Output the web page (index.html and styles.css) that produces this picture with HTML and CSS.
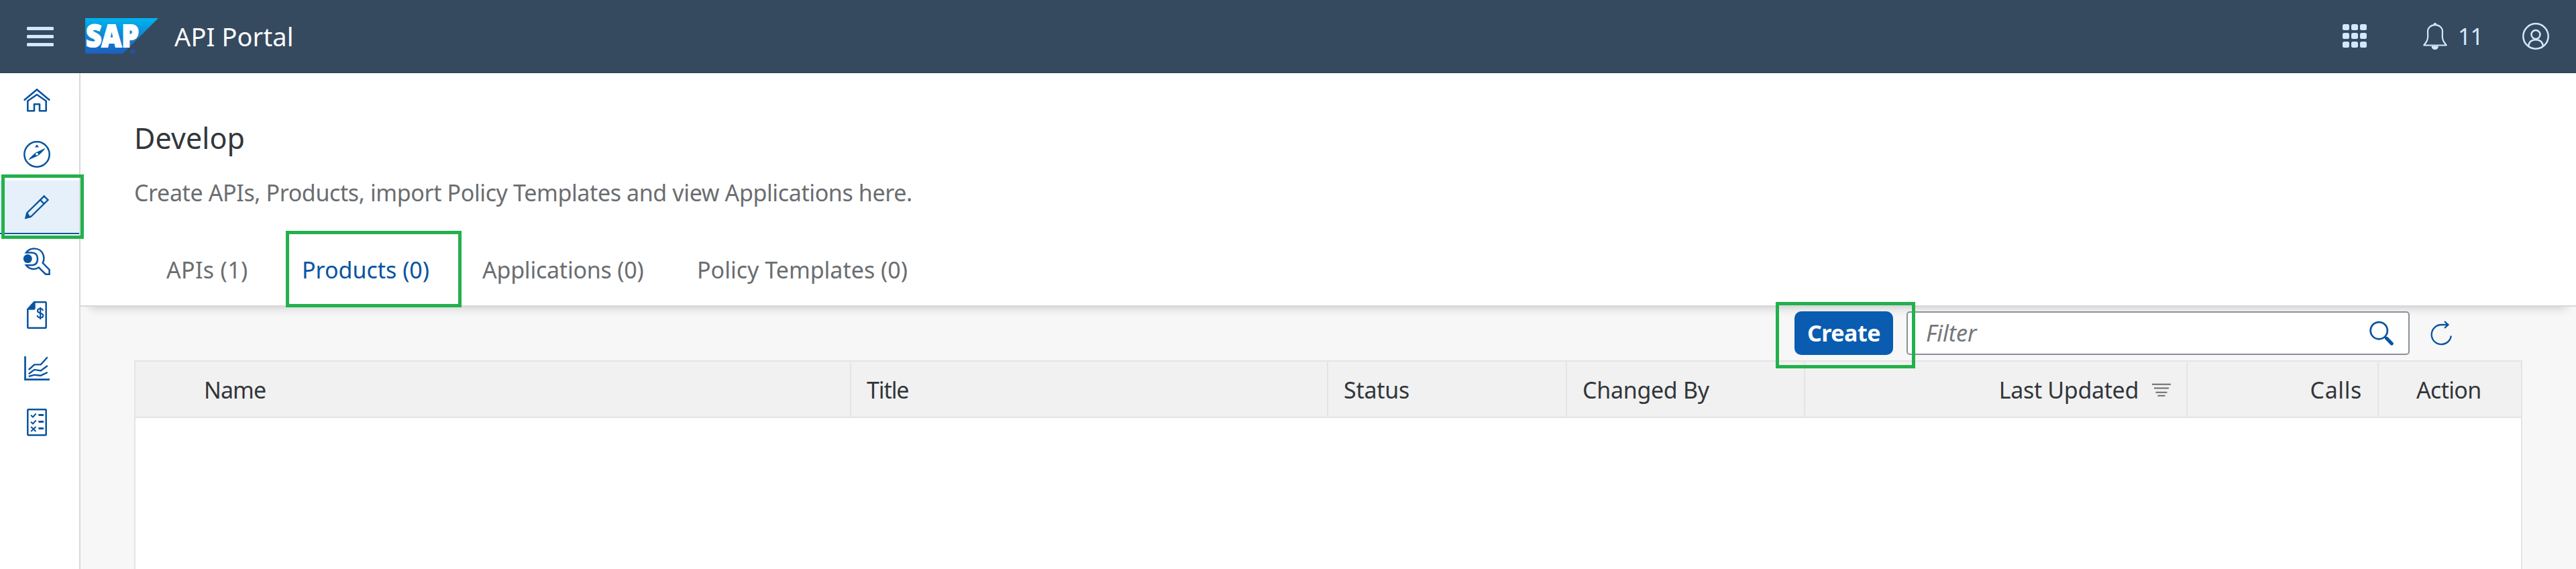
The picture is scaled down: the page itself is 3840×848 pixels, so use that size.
FILE: index.html
```html
<!DOCTYPE html>
<html lang="en">
<head>
<meta charset="utf-8">
<title>API Portal</title>
<link rel="stylesheet" href="styles.css">
</head>
<body>
<header class="shell">
  <svg class="menu" viewBox="0 0 40 30"><g fill="#d1e8ff"><rect width="40" height="5" y="1" rx="1.5"/><rect width="40" height="5" y="13" rx="1.5"/><rect width="40" height="5" y="25" rx="1.5"/></g></svg>
  <svg class="logo" viewBox="0 0 110 54">
    <defs><linearGradient id="sap" x1="0" y1="0" x2="0" y2="1"><stop offset="0" stop-color="#00b4f0"/><stop offset=".5" stop-color="#0f85d4"/><stop offset="1" stop-color="#1f5fbe"/></linearGradient></defs>
    <path d="M0 0H109L56 53H0Z" fill="url(#sap)"/>
    <text class="logo-text" x="1" y="42.500" textLength="79" lengthAdjust="spacingAndGlyphs">SAP</text>
    <circle cx="71" cy="50" r="3.5" fill="#27538c" stroke="#2457a0"/>
  </svg>
  <h1 class="product">API Portal</h1>
  <div class="shell-tools">
    <svg class="apps" viewBox="0 0 36 36"><g fill="#d1e8ff"><rect width="10" height="9" rx="2.5"/><rect x="13" width="10" height="9" rx="2.5"/><rect x="26" width="10" height="9" rx="2.5"/><rect y="13" width="10" height="9" rx="2.5"/><rect x="13" y="13" width="10" height="9" rx="2.5"/><rect x="26" y="13" width="10" height="9" rx="2.5"/><rect y="26" width="10" height="9" rx="2.5"/><rect x="13" y="26" width="10" height="9" rx="2.5"/><rect x="26" y="26" width="10" height="9" rx="2.5"/></g></svg>
    <svg class="bell" viewBox="0 0 36 40"><path d="M18 3.2C11.500 3.200 7 7.500 7 13C7 19 8.500 24 4.500 29L1.300 33.500H34.700L31.500 29C27.500 24 29 19 29 13C29 7.500 24.500 3.200 18 3.200Z" fill="none" stroke="#d1e8ff" stroke-width="2.200" stroke-linejoin="round"/><path d="M15.500 2.500a2.500 2.500 0 0 1 5 0zM12.500 34.500h10.500a5.250 5.500 0 0 1-10.500 0z" fill="#d1e8ff"/></svg>
    <span class="count">11</span>
    <svg class="user" viewBox="0 0 40 40"><g fill="none" stroke="#d1e8ff" stroke-width="2.500"><circle cx="20" cy="20" r="18.700"/><circle cx="20" cy="17.500" r="6.500"/><path d="M9 34.500C10 28 14 25.200 20 25.200S30 28 31 34.500"/></g></svg>
  </div>
</header>

<div class="app">
  <nav class="side">
    <a class="side-item"><svg class="icon" viewBox="0 0 40 40"><path d="M.8 19.600L20 3.500L39.200 19.600" stroke-width="2.600"/><path d="M6.300 20.500L20 11L33.700 20.500V35.200H24V25.300H16V35.200H6.300Z" stroke-width="2.600" stroke-linejoin="round"/></svg></a>
    <a class="side-item"><svg class="icon" viewBox="0 0 40 40"><circle cx="20" cy="20" r="18.700" stroke-width="2.500"/><path class="solid" d="M20 5.300L23 9.600H17ZM7.400 28.500C8 26.500 15 20 18 17.500L32.400 10.800C32 13 25 19.500 22 22Z"/><circle cx="20" cy="19.700" r="1.900" fill="#fff" stroke="none"/></svg></a>
    <a class="side-item selected"><svg class="icon" viewBox="0 0 40 40"><path d="M30.800 3.300L36.500 9L11.500 33.500L3.500 35.800L5.500 28Z M25 9L30.800 14.800" stroke-width="2.400"/><path class="solid" d="M2.300 37L4.500 27.500L7.500 29.500L9 32.500L12 35Z"/></svg></a>
    <a class="side-item"><svg class="icon" viewBox="0 0 40 40"><circle class="solid" cx="6.300" cy="15.600" r="6.500"/><path d="M4 6.500C11 -2.500 24.500 -.5 28.500 7.500C31 12.500 31 17.500 28.700 21.800L38.600 32V38.700H33L22.800 28.500C17 32.500 8.500 31.500 4 25.200H12C18.500 25.200 21 21 21 15.800S18.500 6.500 12 6.500Z" stroke-width="2.500"/></svg></a>
    <a class="side-item"><svg class="icon" viewBox="0 0 40 40"><path d="M16 .3H32.700a1 1 0 0 1 1 1V37.700a1 1 0 0 1-1 1H7.300a1 1 0 0 1-1-1V11Z" stroke-width="2.500"/><path class="solid" d="M5.500 11.700L16.500 -.8H17.700V9.500a2.200 2.200 0 0 1-2.200 2.200Z"/><path d="M29.200 13C28.500 10.500 26.800 10 25 10C22.500 10 21 11.300 21 13.300C21 18 29.300 15.500 29.300 20.200C29.300 22.300 27.500 23.500 25.200 23.500C22.500 23.500 21.200 22.500 20.600 20M25.200 8V26" stroke-width="2.200"/></svg></a>
    <a class="side-item"><svg class="icon" viewBox="0 0 40 40"><path d="M2.500 1V35.600H39" stroke-width="2.700"/><path d="M7.800 21L16.300 13.400H25.800L35.800 2.300M7.800 27.300L16.300 20.900L25.800 22.500L35.800 15M7.800 31L16.300 28.700L25.800 29.700L35.800 25" stroke-width="2.400"/></svg></a>
    <a class="side-item"><svg class="icon" viewBox="0 0 40 40"><rect x="6.300" y=".3" width="27.400" height="38.300" rx="1" stroke-width="2.500"/><path d="M11 8.700L14 11.500L18.700 6.500M11 18.700L14 21.500L18.700 16.500M11.200 26L18.500 33M18.500 26L11.200 33" stroke-width="2"/><path d="M23.500 8.500H29M23.500 18.500H29M23.500 28.500H29" stroke-width="2.800" stroke-linecap="round"/></svg></a>
    <span class="marker marker-side"></span>
  </nav>

  <main class="content">
    <section class="intro">
      <h2 class="title">Develop</h2>
      <p class="lead">Create APIs, Products, import Policy Templates and view Applications here.</p>
      <div class="tabs">
        <a class="tab tab-apis">APIs (1)</a>
        <a class="tab tab-products">Products (0)<span class="marker marker-tab"></span></a>
        <a class="tab tab-apps">Applications (0)</a>
        <a class="tab tab-policies">Policy Templates (0)</a>
      </div>
    </section>
    <section class="list">
      <div class="toolbar">
        <button class="create">Create</button>
        <div class="filter"><span class="placeholder">Filter</span>
          <svg class="search" viewBox="0 0 40 40"><circle cx="16.300" cy="15.700" r="12.600" stroke-width="2.700"/><path d="M25.500 25.500L28 28" stroke-width="3.500"/><path d="M28 27.500L35.200 35" stroke-width="5.200" stroke-linecap="round"/></svg>
        </div>
        <svg class="refresh" viewBox="0 0 36 40"><path d="M31.800 22.500A14.600 14.600 0 1 1 17.300 6H27M22 1L27.500 6L22 11" stroke-width="2.300"/></svg>
        <span class="marker marker-create"></span>
      </div>
      <div class="table">
        <div class="row">
          <div class="cell c-name">Name</div>
          <div class="cell c-title">Title</div>
          <div class="cell c-status">Status</div>
          <div class="cell c-changed">Changed By</div>
          <div class="cell end c-updated">Last Updated<svg class="sort" viewBox="0 0 28 20"><path d="M0 1.700H28M3 7.600H25M5.500 13.700H22.500M8.500 18.700H19.500" stroke="#6a6d70" stroke-width="2"/></svg></div>
          <div class="cell end c-calls">Calls</div>
          <div class="cell c-action">Action</div>
        </div>
      </div>
    </section>
  </main>
</div>
</body>
</html>
```
FILE: styles.css
```css
* { box-sizing: border-box; }
body { margin: 0; height: 848px; overflow: hidden; display: flex; flex-direction: column; background: #f7f7f7; color: #32363a; font-family: "Noto Sans", sans-serif; font-size: 34px; }
h1, h2, p { margin: 0; font-weight: 400; }
svg { display: block; flex: none; overflow: visible; }

.shell { flex: none; height: 109px; display: flex; align-items: center; padding: 0 40px; background: #354a5f; border-bottom: 2px solid #2f4358; color: #fff; }
.menu { width: 40px; height: 30px; margin: 0 47px 0 0; }
.logo { width: 110px; height: 54px; margin-right: 23px; }
.logo-text { font: 800 46px "Open Sans", sans-serif; fill: #fff; stroke: #fff; stroke-width: 2; }
.product { font-size: 38px; line-height: 78px; letter-spacing: .1px; }
.shell-tools { margin-left: auto; display: flex; align-items: center; }
.apps { width: 36px; height: 36px; margin-right: 84px; }
.bell { width: 36px; height: 40px; margin-right: 16px; }
.count { width: 38px; margin-right: 58px; color: #d1e8ff; line-height: 80px; letter-spacing: -1px; }
.user { width: 40px; height: 40px; }

.app { flex: 1; display: flex; min-height: 0; }
.side { position: relative; flex: none; width: 120px; background: #fff; border-right: 2px solid #d9d9d9; }
.side-item { display: flex; align-items: center; height: 80px; padding: 2px 0 0 35px; }
.side-item.selected { background: #e5f0fa; border-bottom: 2px solid #0854a0; }
.icon { width: 40px; height: 40px; fill: none; stroke: #0854a0; }
.icon .solid { fill: #0854a0; stroke: none; }

/* Green callouts laid over the controls they point at */
.marker { position: absolute; border: 5px solid #22b14c; pointer-events: none; }
.marker-side { left: 2px; top: 151px; width: 123px; height: 96px; z-index: 3; }
.marker-tab { left: -24px; top: -5px; width: 262px; height: 114px; }
.marker-create { left: 2527px; top: -14px; width: 208px; height: 99px; }

.content { flex: 1; display: flex; flex-direction: column; min-width: 0; }
.intro { position: relative; z-index: 1; flex: none; height: 348px; padding: 56px 0 0 80px; background: #fff; border-bottom: 2px solid #d9d9d9; box-shadow: 0 14px 14px -13px rgba(0, 0, 0, .2); }
.title { font-size: 43px; line-height: 82px; letter-spacing: .1px; }
.lead { line-height: 80px; color: #6a6d70; letter-spacing: -.38px; }
.tabs { display: flex; margin: 22px 0 0 48px; color: #6a6d70; }
.tab { position: relative; line-height: 106px; white-space: nowrap; }
.tab-apis { width: 202px; letter-spacing: .33px; }
.tab-products { width: 269px; color: #0854a0; }
.tab-apps { width: 320px; letter-spacing: -.23px; }

.list { flex: 1; display: flex; flex-direction: column; padding: 7px 80px 0; }
.toolbar { position: relative; z-index: 2; display: flex; justify-content: flex-end; align-items: center; height: 65px; margin: 0 -80px 8px; padding-right: 182px; }
.create { width: 147px; height: 65px; margin-right: 20px; padding: 0; border: 0; border-radius: 10px; background: #0a5cb0; color: #fff; font: 700 34px/65px "Noto Sans", sans-serif; letter-spacing: -.5px; }
.filter { display: flex; align-items: center; justify-content: space-between; width: 750px; height: 65px; margin-right: 30px; padding: 0 20px 0 27px; border: 2px solid #89919a; border-radius: 5px; background: #fff; }
.placeholder { color: #74777a; font-style: italic; line-height: 61px; }
.search { width: 40px; height: 40px; fill: none; stroke: #0854a0; }
.refresh { width: 36px; height: 40px; fill: none; stroke: #0854a0; margin-top: 3px; }
.table { flex: 1; background: #fff; border: 2px solid #e4e4e4; border-bottom: 0; }
.row { display: flex; height: 84px; background: #f1f1f1; border-bottom: 2px solid #e4e4e4; }
.cell { display: flex; align-items: center; line-height: 82px; padding: 1px 0 0 23px; white-space: nowrap; border-right: 2px solid #e4e4e4; }
.end { justify-content: flex-end; }
.c-name { width: 1067px; padding-left: 102px; letter-spacing: -.9px; }
.c-title { width: 711px; letter-spacing: -1.1px; }
.c-status { width: 356px; letter-spacing: -.25px; }
.c-changed { width: 355px; letter-spacing: -.3px; }
.c-updated { width: 570px; padding-right: 23px; letter-spacing: -.35px; }
.c-calls { width: 285px; padding-right: 23px; letter-spacing: .6px; }
.c-action { flex: 1; padding-left: 56px; border-right: 0; letter-spacing: -.7px; }
.sort { width: 28px; height: 20px; margin-left: 20px; }
```
